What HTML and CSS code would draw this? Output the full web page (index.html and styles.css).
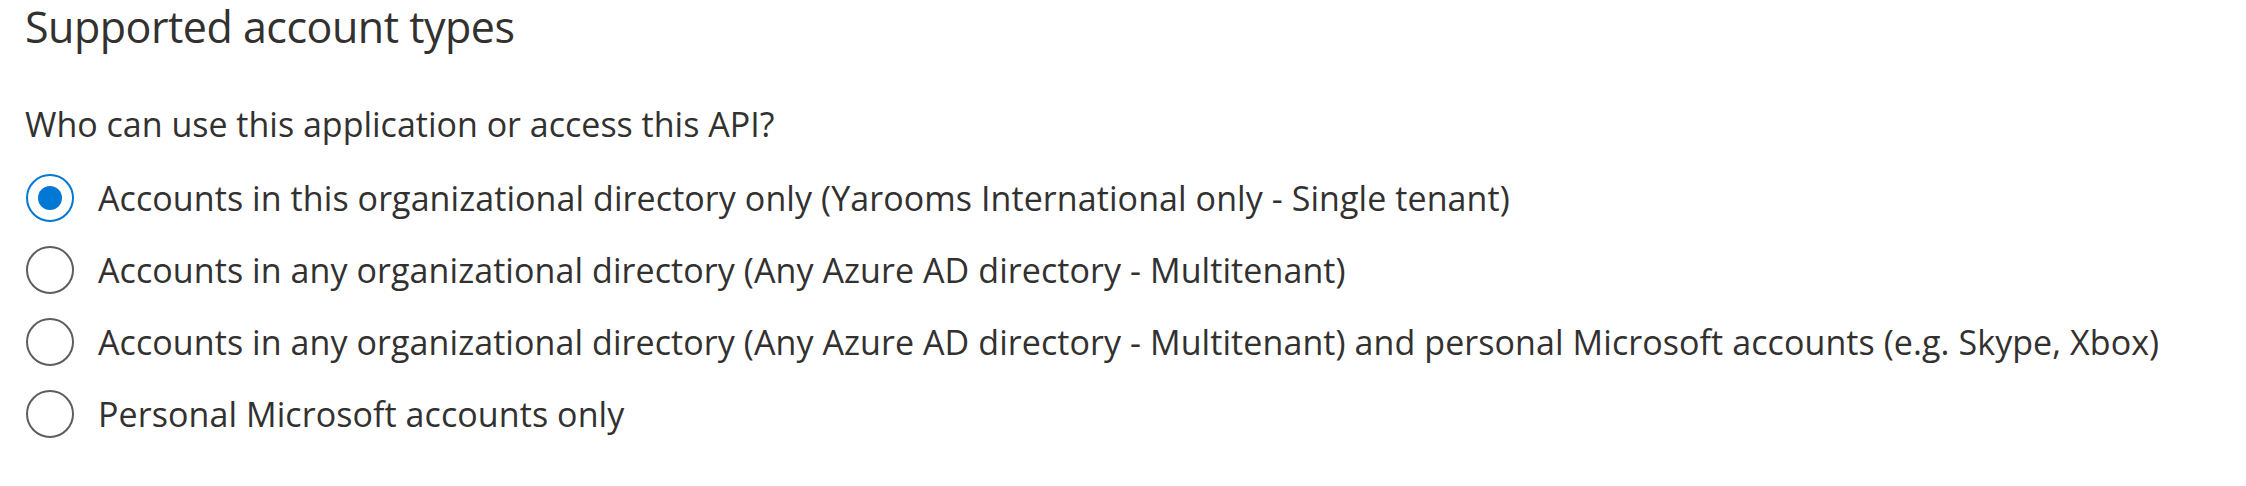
FILE: index.html
```html
<!DOCTYPE html>
<html lang="en">
<head>
<meta charset="utf-8">
<title>Supported account types</title>
<link rel="stylesheet" href="styles.css">
</head>
<body>
<section class="panel">
  <h2 class="title">Supported account types</h2>
  <p class="question">Who can use this application or access this API?</p>
  <div class="choices" role="radiogroup">
    <label class="choice">
      <span class="radio checked"><span class="dot"></span></span>
      <span class="label">Accounts in this organizational directory only (Yarooms International only - Single tenant)</span>
    </label>
    <label class="choice">
      <span class="radio"></span>
      <span class="label">Accounts in any organizational directory (Any Azure AD directory - Multitenant)</span>
    </label>
    <label class="choice">
      <span class="radio"></span>
      <span class="label">Accounts in any organizational directory (Any Azure AD directory - Multitenant) and personal Microsoft accounts (e.g. Skype, Xbox)</span>
    </label>
    <label class="choice">
      <span class="radio"></span>
      <span class="label">Personal Microsoft accounts only</span>
    </label>
  </div>
</section>
</body>
</html>
```

FILE: styles.css
```css
html, body {
  margin: 0;
  padding: 0;
  background: #ffffff;
}

body {
  font-family: "Open Sans", "Noto Sans", "Liberation Sans", sans-serif;
  color: #323130;
}

.panel {
  padding: 2px 0 0 25px;
}

.title {
  margin: 0;
  font-size: 43px;
  font-weight: 400;
  line-height: 50px;
  letter-spacing: -0.5px;
}

.question {
  margin: 48px 0 0 0;
  font-size: 34px;
  line-height: 48px;
}

.choices {
  display: flex;
  flex-direction: column;
  margin-top: 26px;
  gap: 24px;
}

.choice {
  display: flex;
  align-items: center;
  gap: 24px;
  height: 48px;
}

.radio {
  box-sizing: border-box;
  width: 48px;
  height: 48px;
  margin-left: 1px;
  border: 2.5px solid #605e5c;
  border-radius: 50%;
  display: flex;
  align-items: center;
  justify-content: center;
  flex: none;
}

.radio.checked {
  border-color: #0078d4;
}

.dot {
  width: 24px;
  height: 24px;
  border-radius: 50%;
  background: #0078d4;
}

.label {
  font-size: 34px;
  line-height: 48px;
  letter-spacing: 0.08px;
  white-space: nowrap;
}
```
